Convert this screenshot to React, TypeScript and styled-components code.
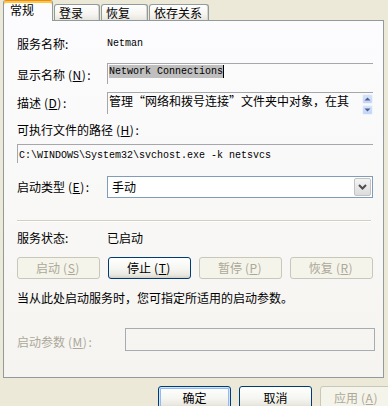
import React from "react";
import styled, { createGlobalStyle } from "styled-components";

const Global = createGlobalStyle`
  html, body { margin: 0; padding: 0; background: #ECE9D8; }
  body {
    font-family: "Noto Sans CJK SC", "Liberation Sans", sans-serif;
    font-size: 12px;
    color: #000;
  }
`;

const Window = styled.div`
  width: 388px;
  height: 406px;
  overflow: hidden;
  background: #ece9d8;
  display: flex;
  flex-direction: column;
`;

const TabStrip = styled.div`
  display: flex;
  align-items: flex-end;
  height: 20px;
  padding-left: 3px;
  position: relative;
  z-index: 1;
`;

const Tab = styled.div<{ $active?: boolean; $w: number }>`
  box-sizing: border-box;
  width: ${(p) => p.$w}px;
  height: ${(p) => (p.$active ? 21 : 16)}px;
  margin-bottom: ${(p) => (p.$active ? -1 : 0)}px;
  margin-left: ${(p) => (p.$active ? 0 : 1)}px;
  border: 1px solid #919b9c;
  border-bottom: none;
  border-top-color: ${(p) => (p.$active ? "#e68b2c" : "#919b9c")};
  border-radius: 3px 3px 0 0;
  background: ${(p) =>
    p.$active
      ? "#fcfcfe"
      : "linear-gradient(#fefefe, #f6f5f1 60%, #e8e6dd)"};
  box-shadow: ${(p) => (p.$active ? "inset 0 2px 0 #ffc83c" : "inset -1px 0 0 #d8d6cc")};
  display: flex;
  align-items: center;
  justify-content: flex-start;
  padding: ${(p) => (p.$active ? "0 0 2px 6px" : "1px 0 0 4px")};
  line-height: 14px;
  white-space: nowrap;
`;

const Panel = styled.div`
  box-sizing: border-box;
  margin-left: 3px;
  width: 381px;
  height: 358px;
  border: 1px solid #919b9c;
  background: linear-gradient(#fcfcfe, #f5f4f0);
  padding: 16px 10px 0 13px;
  display: flex;
  flex-direction: column;
  flex: none;
`;

const Row = styled.div<{ $mt: number; $align?: string }>`
  display: flex;
  align-items: ${(p) => p.$align || "flex-start"};
  margin-top: ${(p) => p.$mt}px;
  line-height: 14px;
`;

const Label = styled.div<{ $w?: number; $pt?: number; $muted?: boolean }>`
  width: ${(p) => p.$w ?? 90}px;
  flex: none;
  padding-top: ${(p) => p.$pt ?? 0}px;
  color: ${(p) => (p.$muted ? "#aca899" : "#000")};
  white-space: nowrap;
`;

const Hot = styled.span`
  padding: 0 1px 0 3px;
  letter-spacing: 0.5px;
`;

const Mono = styled.span`
  font-family: "Liberation Mono", "DejaVu Sans Mono", monospace;
  font-size: 10px;
  line-height: 14px;
`;

const Field = styled.div<{ $h: number }>`
  box-sizing: border-box;
  flex: 1;
  height: ${(p) => p.$h}px;
  border-top: 1px solid #a7a6aa;
  border-left: 1px solid #a7a6aa;
  padding: 1px 0 0 1px;
  display: flex;
  align-items: flex-start;
  justify-content: space-between;
  white-space: nowrap;
`;

const Selected = styled.span`
  background: #bfbfbf;
  font-family: "Liberation Mono", "DejaVu Sans Mono", monospace;
  font-size: 10px;
  line-height: 12px;
  height: 13px;
  display: inline-flex;
  align-items: center;
  border-right: 1px solid #000;
`;

const DescText = styled.span`
  line-height: 14px;
`;

const Spinner = styled.div`
  display: flex;
  flex-direction: column;
  gap: 1px;
`;

const SpinBtn = styled.div`
  box-sizing: border-box;
  width: 11px;
  height: 10px;
  border: 1px solid #eef3fc;
  border-radius: 2px;
  background: linear-gradient(#d6e2fb, #c2d4f8);
  display: flex;
  align-items: center;
  justify-content: center;
`;

const PathBox = styled.div`
  box-sizing: border-box;
  flex: 1;
  height: 19px;
  border-top: 1px solid #a7a6aa;
  border-left: 1px solid #a7a6aa;
  padding: 1px 0 0 1px;
  white-space: nowrap;
`;

const Select = styled.div`
  box-sizing: border-box;
  flex: 1;
  height: 22px;
  border: 1px solid #7f9db9;
  background: #fff;
  display: flex;
  align-items: center;
  justify-content: space-between;
  padding: 0 1px 0 4px;
`;

const DropBtn = styled.div`
  box-sizing: border-box;
  width: 17px;
  height: 18px;
  border: 1px solid #c3c3c3;
  border-radius: 2px;
  background: linear-gradient(#f4f4f4, #dcdcdc);
  display: flex;
  align-items: center;
  justify-content: center;
`;

const Separator = styled.div`
  flex: 1;
  height: 1px;
  background: #d0d0bf;
  border-bottom: 1px solid #ffffff;
  margin-right: 2px;
`;

const ButtonRow = styled.div`
  display: flex;
  justify-content: space-between;
  margin-top: 12px;
`;

const Btn = styled.div<{ $w: number; $disabled?: boolean; $default?: boolean; $h?: number }>`
  box-sizing: border-box;
  width: ${(p) => p.$w}px;
  height: ${(p) => p.$h ?? 22}px;
  flex: none;
  border: 1px solid ${(p) => (p.$disabled ? "#c9c7ba" : "#003c74")};
  border-radius: 3px;
  background: ${(p) =>
    p.$disabled
      ? "#f5f4ea"
      : "linear-gradient(#ffffff, #f5f5f1 55%, #e9e8e0 85%, #d6d0c5)"};
  color: ${(p) => (p.$disabled ? "#aca899" : "#000")};
  box-shadow: ${(p) =>
    p.$default ? "inset 0 0 0 1px #cee7ff, inset 0 0 0 2px #98b8ea" : "none"};
  display: flex;
  align-items: center;
  justify-content: center;
  line-height: 14px;
  white-space: nowrap;
`;

const ParamInput = styled.div`
  box-sizing: border-box;
  flex: 1;
  height: 23px;
  margin-right: -2px;
  border: 1px solid #a5acb2;
`;

const Footer = styled.div`
  display: flex;
  gap: 8px;
  padding: 8px 0 0 158px;
`;

const Up = () => (
  <svg width="7" height="4" viewBox="0 0 7 4">
    <path d="M0.5 3.5 L3.5 0.5 L6.5 3.5 Z" fill="#4d6185" />
  </svg>
);
const Down = () => (
  <svg width="7" height="4" viewBox="0 0 7 4">
    <path d="M0.5 0.5 L3.5 3.5 L6.5 0.5 Z" fill="#4d6185" />
  </svg>
);
const Chevron = () => (
  <svg width="9" height="6" viewBox="0 0 9 6">
    <path d="M1 1 L4.5 4.5 L8 1" stroke="#4d4d4d" strokeWidth="2" fill="none" />
  </svg>
);

const Key = ({ k }: { k: string }) => (
  <Hot>
    (<u>{k}</u>)
  </Hot>
);

export default function App() {
  return (
    <>
      <Global />
      <Window>
        <TabStrip>
          <Tab $active $w={50}>常规</Tab>
          <Tab $w={46}>登录</Tab>
          <Tab $w={47}>恢复</Tab>
          <Tab $w={60}>依存关系</Tab>
        </TabStrip>
        <Panel>
          <Row $mt={0}>
            <Label>服务名称:</Label>
            <Mono>Netman</Mono>
          </Row>
          <Row $mt={12}>
            <Label $pt={5}>
              显示名称<Key k="N" />:
            </Label>
            <Field $h={21}>
              <Selected>Network Connections</Selected>
            </Field>
          </Row>
          <Row $mt={8}>
            <Label $pt={4}>
              描述<Key k="D" />:
            </Label>
            <Field $h={22}>
              <DescText>管理“网络和拨号连接”文件夹中对象，在其</DescText>
              <Spinner>
                <SpinBtn>
                  <Up />
                </SpinBtn>
                <SpinBtn>
                  <Down />
                </SpinBtn>
              </Spinner>
            </Field>
          </Row>
          <Row $mt={9}>
            <Label $w={200}>
              可执行文件的路径<Key k="H" />:
            </Label>
          </Row>
          <Row $mt={7}>
            <PathBox>
              <Mono>C:\WINDOWS\System32\svchost.exe -k netsvcs</Mono>
            </PathBox>
          </Row>
          <Row $mt={13} $align="center">
            <Label>
              启动类型<Key k="E" />:
            </Label>
            <Select>
              <span>手动</span>
              <DropBtn>
                <Chevron />
              </DropBtn>
            </Select>
          </Row>
          <Row $mt={22}>
            <Separator />
          </Row>
          <Row $mt={9}>
            <Label>服务状态:</Label>
            <span>已启动</span>
          </Row>
          <ButtonRow>
            <Btn $w={83} $disabled>
              启动<Key k="S" />
            </Btn>
            <Btn $w={83}>
              停止<Key k="T" />
            </Btn>
            <Btn $w={83} $disabled>
              暂停<Key k="P" />
            </Btn>
            <Btn $w={83} $disabled>
              恢复<Key k="R" />
            </Btn>
          </ButtonRow>
          <Row $mt={12}>
            <span>当从此处启动服务时，您可指定所适用的启动参数。</span>
          </Row>
          <Row $mt={23}>
            <Label $w={108} $pt={7} $muted>
              启动参数<Key k="M" />:
            </Label>
            <ParamInput />
          </Row>
        </Panel>
        <Footer>
          <Btn $w={73} $h={23} $default>确定</Btn>
          <Btn $w={73} $h={23}>取消</Btn>
          <Btn $w={73} $h={23} $disabled>
            应用<Key k="A" />
          </Btn>
        </Footer>
      </Window>
    </>
  );
}
